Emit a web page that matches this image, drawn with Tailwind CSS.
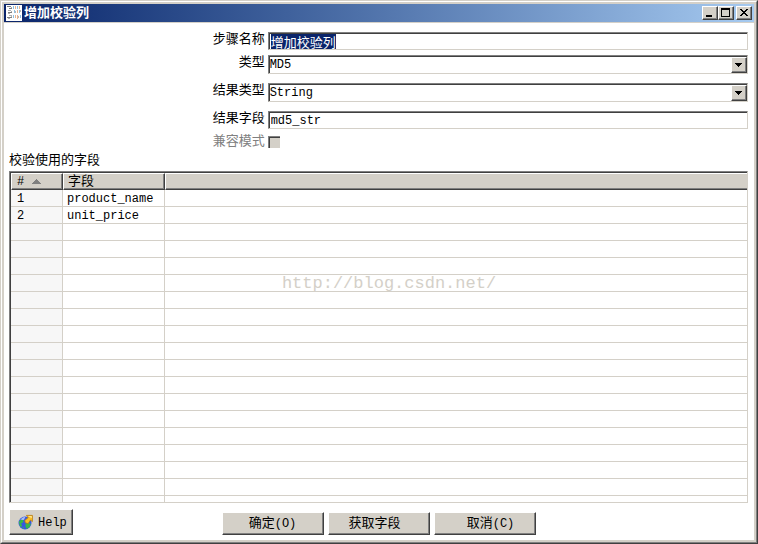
<!DOCTYPE html>
<html lang="zh-CN">
<head>
<meta charset="utf-8">
<title>增加校验列</title>
<script src="https://cdn.jsdelivr.net/npm/@tailwindcss/browser@4"></script>
</head>
<body class="bg-white text-black text-[13px] leading-4 font-['Liberation_Mono','Noto_Sans_CJK_SC',monospace]">
<div class="h-screen border border-t-[#d4d0c8] border-l-[#d4d0c8] border-r-[#404040] border-b-[#404040]">
<div class="h-full border border-t-white border-l-white border-r-[#808080] border-b-[#808080]">
<div class="relative h-full flex flex-col border-2 border-[#d4d0c8]">

  <header class="shrink-0 h-[19px] flex items-center pl-[2px] pr-[2px] gap-[2px] bg-linear-to-r from-[#0a246a] to-[#a6caf0] border-b border-[#d4d0c8]">
    <svg class="w-4 h-4 shrink-0" viewBox="0 0 16 16" shape-rendering="crispEdges" aria-hidden="true">
      <path fill="#fff" d="M0 0h16v16H0z"/>
      <path fill="#808080" d="M1 1h4v1H1zM3 3h3v1H3zM2 7h4v1H2zM1 12h5v1H1z"/>
      <path fill="#b0b0b0" d="M5 2h1v1H5zM2 5h3v1H2zM5 6h1v1H5zM2 8h2v1H2zM3 10h3v1H3zM5 11h1v1H5zM2 13h2v1H2z"/>
      <path fill="#8fbfe0" d="M7 1h1v3H7zM11 1h1v3h-1zM8 5h1v3H8zM13 5h1v3h-1zM7 10h1v3H7zM14 10h1v3h-1z"/>
      <path fill="#e9b48e" d="M9 1h1v3H9zM13 1h1v3h-1zM11 5h1v3h-1zM9 10h1v3H9zM11 10h1v4h-1z"/>
      <path fill="#b8b8b8" d="M9 6h1v2H9zM14 5h1v2h-1zM12 11h1v2h-1z"/>
    </svg>
    <h1 class="flex-1 pt-[2px] text-white font-bold">增加校验列</h1>
    <div class="flex">
      <button aria-label="最小化" class="w-4 h-[14px] bg-[#d4d0c8] border border-t-white border-l-white border-r-[#404040] border-b-[#404040] shadow-[inset_-1px_-1px_#808080]">
        <svg class="w-[14px] h-3" viewBox="0 0 14 12" shape-rendering="crispEdges"><path d="M3 8h6v2H3z"/></svg>
      </button>
      <button aria-label="最大化" class="w-4 h-[14px] bg-[#d4d0c8] border border-t-white border-l-white border-r-[#404040] border-b-[#404040] shadow-[inset_-1px_-1px_#808080]">
        <svg class="w-[14px] h-3" viewBox="0 0 14 12" shape-rendering="crispEdges"><path fill-rule="evenodd" d="M2 1h9v9H2zM3 3v6h7V3z"/></svg>
      </button>
      <button aria-label="关闭" class="ml-[2px] w-4 h-[14px] bg-[#d4d0c8] border border-t-white border-l-white border-r-[#404040] border-b-[#404040] shadow-[inset_-1px_-1px_#808080]">
        <svg class="w-[14px] h-3" viewBox="0 0 14 12" shape-rendering="crispEdges"><path d="M3 2h2v1h1v1h2V3h1V2h2v1h-1v1H9v1H8v1h1v1h1v1h1v1H9V8H8V7H6v1H5v1H3V8h1V7h1V6h1V5H5V4H4V3H3z"/></svg>
      </button>
    </div>
  </header>

  <main class="flex-1 min-h-0 flex flex-col pl-[5px] pr-[6px] pt-[9px] pb-[5px]">
    <form class="flex flex-col">
      <div class="flex items-start mb-[5px]">
        <label for="step" class="w-[35%] pr-[3px] text-right">步骤名称</label>
        <div class="flex-1 border border-t-[#808080] border-l-[#808080] border-[#d4d0c8]">
          <input id="step" type="text" value="增加校验列" autofocus class="block w-full h-4 px-px leading-[14px] border-t border-l border-[#404040] outline-none selection:bg-[#0a246a] selection:text-white">
        </div>
      </div>
      <div class="flex items-start mb-[9px]">
        <label for="type" class="w-[35%] pr-[3px] text-right">类型</label>
        <div class="relative flex-1 border border-t-[#808080] border-l-[#808080] border-[#d4d0c8]">
          <select id="type" class="block w-full h-[17px] text-xs leading-[15px] appearance-none bg-white border-t border-l border-[#404040] outline-none"><option>MD5</option><option>CRC 32</option><option>ADLER 32</option><option>SHA-1</option></select>
          <span class="absolute right-0 top-px w-4 h-4 pointer-events-none bg-[#d4d0c8] border border-t-white border-l-white border-r-[#404040] border-b-[#404040] shadow-[inset_-1px_-1px_#808080]">
            <svg class="w-[14px] h-[14px]" viewBox="0 0 14 14" shape-rendering="crispEdges"><path d="M3 5h7v1H9v1H8v1H7v1H6V8H5V7H4V6H3z"/></svg>
          </span>
        </div>
      </div>
      <div class="flex items-start mb-[9px]">
        <label for="rtype" class="w-[35%] pr-[3px] text-right">结果类型</label>
        <div class="relative flex-1 border border-t-[#808080] border-l-[#808080] border-[#d4d0c8]">
          <select id="rtype" class="block w-full h-[17px] text-xs leading-[15px] appearance-none bg-white border-t border-l border-[#404040] outline-none"><option>String</option><option>Hexadecimal</option><option>Binary</option></select>
          <span class="absolute right-0 top-px w-4 h-4 pointer-events-none bg-[#d4d0c8] border border-t-white border-l-white border-r-[#404040] border-b-[#404040] shadow-[inset_-1px_-1px_#808080]">
            <svg class="w-[14px] h-[14px]" viewBox="0 0 14 14" shape-rendering="crispEdges"><path d="M3 5h7v1H9v1H8v1H7v1H6V8H5V7H4V6H3z"/></svg>
          </span>
        </div>
      </div>
      <div class="flex items-start mb-[5px]">
        <label for="rfield" class="w-[35%] pr-[3px] text-right">结果字段</label>
        <div class="flex-1 border border-t-[#808080] border-l-[#808080] border-[#d4d0c8]">
          <input id="rfield" type="text" value="md5_str" class="block w-full h-4 px-px text-xs leading-[14px] border-t border-l border-[#404040] outline-none">
        </div>
      </div>
      <div class="flex items-center">
        <label for="compat" class="w-[35%] pr-[3px] text-right text-[#808080]">兼容模式</label>
        <input id="compat" type="checkbox" disabled class="w-3 h-3 appearance-none bg-[#d4d0c8] border-t border-l border-[#808080] shadow-[inset_1px_1px_#404040]">
      </div>
    </form>

    <h2 id="fields" class="mt-[3px] mb-[2px]">校验使用的字段</h2>
    <div class="flex-1 min-h-0 border border-t-[#808080] border-l-[#808080] border-[#d4d0c8]">
      <div class="h-full overflow-hidden border-t border-l border-[#404040]">
        <table aria-labelledby="fields" class="w-full table-fixed border-separate border-spacing-0 text-xs leading-[14px]">
          <colgroup><col class="w-[52px]"><col class="w-[102px]"><col></colgroup>
          <thead>
            <tr class="h-[17px] bg-[#d4d0c8] text-left">
              <th class="p-0 border-t border-l border-t-white border-l-white border-r border-r-[#404040] border-b border-b-[#404040] shadow-[inset_-1px_-1px_#808080] font-normal">
                <span class="flex items-center gap-2 pl-[5px]">#
                  <svg class="w-[10px] h-[5px]" viewBox="0 0 10 5" shape-rendering="crispEdges" aria-hidden="true"><path fill="#808080" d="M4 0h1v1h1v1h1v1h1v1h1v1H0V4h1V3h1V2h1V1h1z"/></svg>
                </span>
              </th>
              <th class="p-0 pl-1 border-t border-l border-t-white border-l-white border-r border-r-[#404040] border-b border-b-[#404040] shadow-[inset_-1px_-1px_#808080] font-normal text-[13px]">字段</th>
              <td class="p-0 border-t border-l border-t-white border-l-white border-b border-b-[#404040] shadow-[inset_0_-1px_#808080]"></td>
            </tr>
          </thead>
          <tbody id="rows"></tbody>
        </table>
      </div>
    </div>

    <footer class="relative shrink-0 mt-[9px] flex items-end justify-center gap-1">
      <button class="absolute left-0 bottom-0 w-16 h-[26px] pl-[7px] flex items-center gap-[5px] text-xs bg-[#d4d0c8] border border-t-white border-l-white border-r-[#404040] border-b-[#404040] shadow-[inset_-1px_-1px_#808080]">
        <svg class="w-4 h-4" viewBox="0 0 16 16" aria-hidden="true">
          <circle cx="8" cy="9" r="6.500" fill="#3558e0"/>
          <path fill="#a9bdf6" d="M3.500 5.500q2-2.500 5-2.700l-1.500 3-2.500 1z"/>
          <path fill="#35b84c" d="M2 7.500l2.500-2 2 1-.5 2-2 1 1 2-1 2q-2-2-2-6zM8.500 9.500l3-.5 2.500 1-1.500 3-2.500 2-1.500-2zM5 13l2 .5v1.500z"/>
          <path fill="#fbbf24" stroke="#b87a10" stroke-width=".8" d="M9.400 1.400h6v6.200l-1.900-1.600-2.300 3.600-2.900-.8-.5-2.400 3.400-2.800z"/>
          <path fill="#ffe68a" d="M10.800 2h4v2.200z"/>
        </svg><span class="pt-px">Help</span>
      </button>
      <button class="w-[102px] h-[23px] bg-[#d4d0c8] border border-t-white border-l-white border-r-[#404040] border-b-[#404040] shadow-[inset_-1px_-1px_#808080]">确定<span class="text-xs">(O)</span></button>
      <button class="w-[102px] h-[23px] pr-2 bg-[#d4d0c8] border border-t-white border-l-white border-r-[#404040] border-b-[#404040] shadow-[inset_-1px_-1px_#808080]">获取字段</button>
      <button class="w-[102px] h-[23px] pl-3 bg-[#d4d0c8] border border-t-white border-l-white border-r-[#404040] border-b-[#404040] shadow-[inset_-1px_-1px_#808080]">取消<span class="text-xs">(C)</span></button>
    </footer>
  </main>

  <p class="absolute left-0 right-0 top-[270px] pl-[20px] text-center text-[17px] leading-5 text-[#d4d0c8] pointer-events-none">http://blog.csdn.net/</p>
</div>
</div>
</div>
<script>
  const fields = ['product_name', 'unit_price'];
  const body = document.getElementById('rows');
  for (let i = 0; i < 19; i++) {
    const row = document.createElement('tr');
    row.className = 'h-[17px]';
    row.innerHTML =
      '<td class="p-0 pt-[2px] pl-[6px] bg-[#f7f7f7] border-r border-b border-[#d4d0c8]">' + (fields[i] ? i + 1 : '') + '</td>' +
      '<td class="p-0 pt-[2px] pl-[4px] border-r border-b border-[#d4d0c8]">' + (fields[i] || '') + '</td>' +
      '<td class="p-0 border-b border-[#d4d0c8]"></td>';
    body.append(row);
  }
  const step = document.getElementById('step');
  step.focus();
  step.select();
</script>
</body>
</html>
